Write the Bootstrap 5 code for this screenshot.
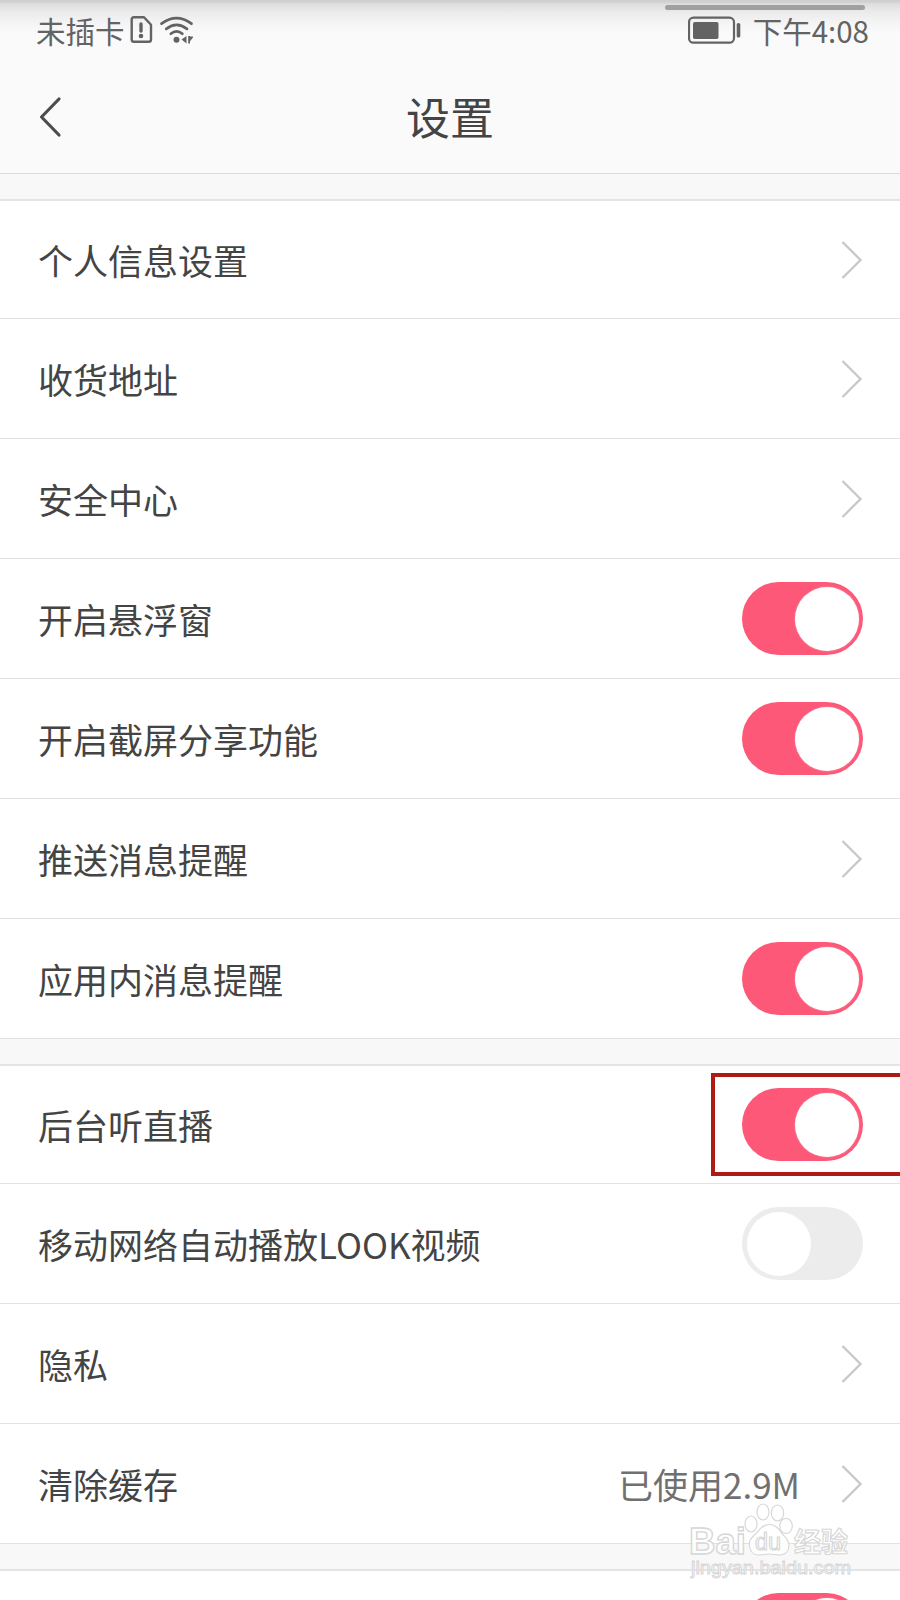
<!DOCTYPE html>
<html lang="zh-CN">
<head>
<meta charset="utf-8">
<meta name="viewport" content="width=device-width, initial-scale=1">
<title>设置</title>
<link href="https://cdn.jsdelivr.net/npm/bootstrap@5.3.0/dist/css/bootstrap.min.css" rel="stylesheet">
<style>
  body { font-family: "Noto Sans CJK SC", sans-serif; background: #f8f8f8; color: #444; }
  .screen { height: 1600px; }
  .top-area { height: 174px; border-bottom: 1px solid #dcdcdc;
    background: linear-gradient(#cfcfcf 0, #d0d0d0 2px, #dedede 4px, #ececec 13px, #f5f5f5 24px, #fafafa 34px); }
  .status { height: 60px; padding: 0 31px 0 36px; font-size: 29.5px; line-height: 60px; color: #636363; }
  .handle { left: 665px; top: 5px; width: 200px; height: 5px; border-radius: 3px; background: #a0a0a0; }
  .title-bar { height: 113px; }
  .title-bar h1 { font-size: 44px; font-weight: 400; line-height: 113px; }
  .back { left: 39px; top: 36px; }
  .group { margin-top: 25px; border-top: 2px solid #e4e4e4; }
  .cell { height: 120px; padding: 0 37px 0 38px; font-size: 35px; line-height: 50px; background: #fff; border-bottom: 1px solid #e2e2e2; }
  .cell:first-child { height: 118px; }
  .toggle { width: 121px; height: 73px; padding: 4.5px; border-radius: 37px; background: #ececec; }
  .toggle.on { background: #fd5878; }
  .toggle i { width: 64px; height: 64px; border-radius: 50%; background: #fff; }
  .toggle.on i { box-shadow: 0 0 2px #f0a0b0; }
  .hint { color: #707070; margin-right: 41px; }
  .frame { left: 711px; right: -6px; top: 7px; height: 103px; border: 4px solid #ad1b12; }
  .watermark { left: 680px; top: 1495px; }
</style>
</head>
<body>
<main class="screen position-relative overflow-hidden">
  <header class="top-area">
    <div class="status d-flex justify-content-between">
      <div class="handle position-absolute"></div>
      <div class="d-flex">
        <span>未插卡</span>
        <svg width="72" height="60" viewBox="0 0 72 60" fill="none" stroke="#636363">
          <path d="M9 17.2h10l7 7.5v14.8q0 2.3-2.3 2.3H9q-2.3 0-2.3-2.3V19.5q0-2.3 2.3-2.3Z" stroke-width="2.4" stroke-linejoin="round"/>
          <path d="M16 24v7" stroke-width="3.4" stroke-linecap="round"/>
          <circle cx="16" cy="36" r="2.3" fill="#636363" stroke="none"/>
          <g stroke-width="2.7" stroke-linecap="round">
            <path d="M36.5 23.7q15-11 30 0M41.2 28.9q10.4-8 20.8 0M45.8 33.7q5.8-4.5 11.6 0"/>
          </g>
          <circle cx="51.5" cy="39.7" r="3" fill="#636363" stroke="none"/>
          <path d="M61.5 36v7.5l-5-4zM63.2 36v7.5h1.8v-2.3l3-3.6v-1h-3V36z" fill="#636363" stroke="none"/>
        </svg>
      </div>
      <div class="d-flex">
        <svg width="65" height="60" viewBox="0 0 65 60">
          <rect x="1" y="17.7" width="45" height="25" rx="4.5" fill="none" stroke="#636363" stroke-width="2.2"/>
          <rect x="5" y="22" width="25.5" height="17" rx="1.8" fill="#636363"/>
          <rect x="48.7" y="23" width="3.6" height="14.5" rx="1.6" fill="#636363"/>
        </svg>
        <span>下午4:08</span>
      </div>
    </div>
    <div class="title-bar position-relative text-center">
      <svg class="back position-absolute" width="24" height="42" viewBox="0 0 24 42" fill="none" stroke="#4c4c4c" stroke-width="3.2" stroke-linecap="round" stroke-linejoin="round"><path d="M20 3 2.5 21 20 39"/></svg>
      <h1 class="m-0">设置</h1>
    </div>
  </header>

  <svg class="d-none">
    <symbol id="next" viewBox="0 0 22 40"><path d="M1.5 2 19.5 20 1.5 38" fill="none" stroke="#c8c8c8" stroke-width="2.3"/></symbol>
  </svg>

  <section class="group">
    <div class="cell d-flex align-items-center justify-content-between"><span>个人信息设置</span><svg width="22" height="40"><use href="#next"/></svg></div>
    <div class="cell d-flex align-items-center justify-content-between"><span>收货地址</span><svg width="22" height="40"><use href="#next"/></svg></div>
    <div class="cell d-flex align-items-center justify-content-between"><span>安全中心</span><svg width="22" height="40"><use href="#next"/></svg></div>
    <div class="cell d-flex align-items-center justify-content-between"><span>开启悬浮窗</span><div class="toggle on d-flex justify-content-end"><i></i></div></div>
    <div class="cell d-flex align-items-center justify-content-between"><span>开启截屏分享功能</span><div class="toggle on d-flex justify-content-end"><i></i></div></div>
    <div class="cell d-flex align-items-center justify-content-between"><span>推送消息提醒</span><svg width="22" height="40"><use href="#next"/></svg></div>
    <div class="cell d-flex align-items-center justify-content-between"><span>应用内消息提醒</span><div class="toggle on d-flex justify-content-end"><i></i></div></div>
  </section>

  <section class="group">
    <div class="cell position-relative d-flex align-items-center justify-content-between"><span>后台听直播</span><div class="toggle on d-flex justify-content-end"><i></i></div><div class="frame position-absolute"></div></div>
    <div class="cell d-flex align-items-center justify-content-between"><span>移动网络自动播放LOOK视频</span><div class="toggle d-flex"><i></i></div></div>
    <div class="cell d-flex align-items-center justify-content-between"><span>隐私</span><svg width="22" height="40"><use href="#next"/></svg></div>
    <div class="cell d-flex align-items-center"><span class="me-auto">清除缓存</span><span class="hint">已使用2.9M</span><svg width="22" height="40"><use href="#next"/></svg></div>
  </section>

  <section class="group">
    <div class="cell d-flex align-items-center justify-content-end"><div class="toggle on d-flex justify-content-end"><i></i></div></div>
  </section>

  <svg class="watermark position-absolute" width="180" height="95" viewBox="0 0 180 95" fill="#fff" fill-opacity=".85" stroke="#d6d6d6" stroke-width="1.1">
    <g font-family="Liberation Sans, Noto Sans CJK SC, sans-serif">
      <text x="9" y="59" font-size="36" font-weight="700" textLength="57" lengthAdjust="spacingAndGlyphs" stroke-width="1.3">Bai</text>
      <ellipse cx="71" cy="29" rx="6" ry="8"/>
      <ellipse cx="83" cy="17" rx="6" ry="8"/>
      <ellipse cx="97.500" cy="18" rx="6.200" ry="8"/>
      <ellipse cx="106" cy="31" rx="6.300" ry="7.500"/>
      <path d="M89 29.500c-7 0-10 6-14 10-4 4-6.500 6-5.500 12 1 6 5 9 10 8.500 5-.5 6-1 10-1s6 1 10 1c6 0 9.500-4 9.500-10 0-5-4-8-7-11.500-3-4-6-9-13-9Z"/>
      <text x="75" y="55" font-size="23" textLength="26" lengthAdjust="spacingAndGlyphs">du</text>
      <text x="114" y="57" font-size="27" font-weight="700" font-family="Noto Sans CJK SC, sans-serif">经验</text>
      <text x="11" y="79" font-size="18" textLength="160" lengthAdjust="spacingAndGlyphs" stroke-width=".9">jingyan.baidu.com</text>
    </g>
  </svg>
</main>
<script src="https://cdn.jsdelivr.net/npm/bootstrap@5.3.0/dist/js/bootstrap.bundle.min.js"></script>
</body>
</html>
